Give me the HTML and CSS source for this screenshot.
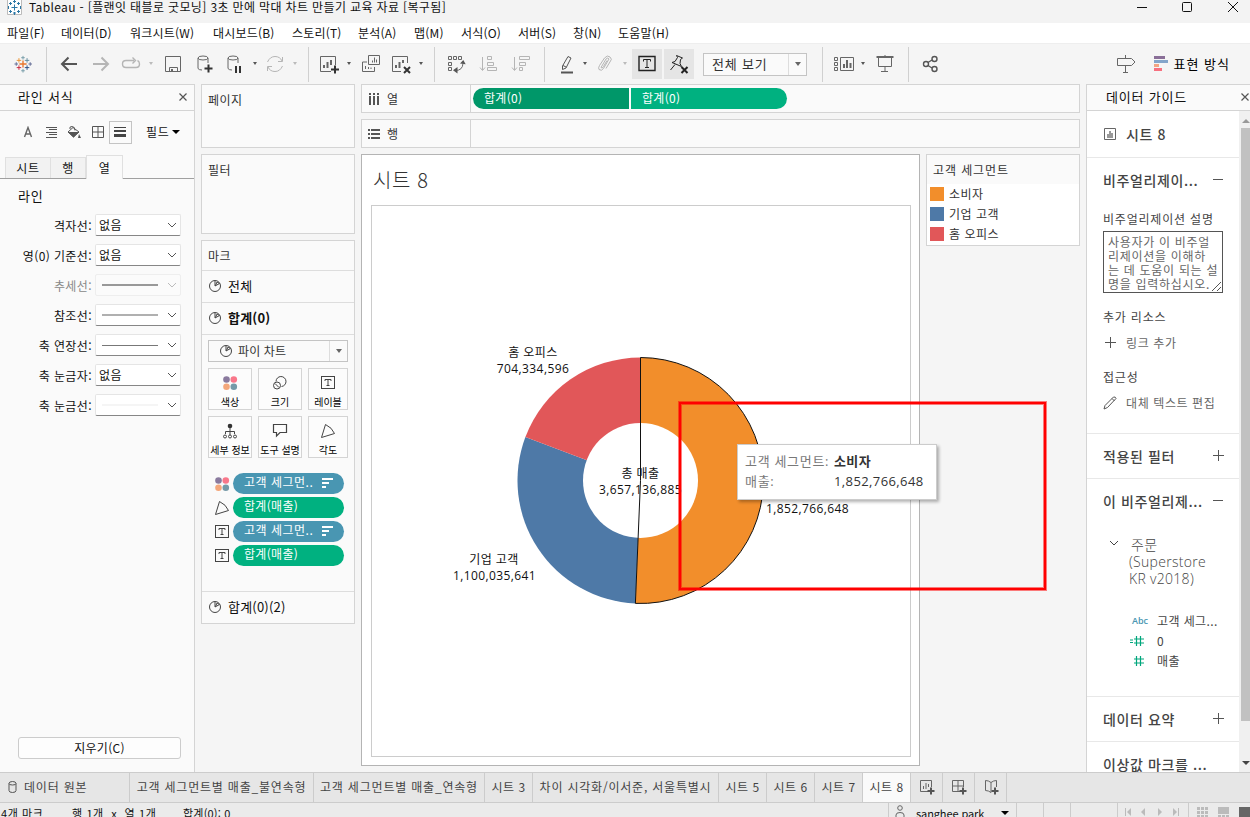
FILE: index.html
```html
<!DOCTYPE html>
<html lang="ko">
<head>
    <meta charset="UTF-8">
    <meta name="viewport" content="width=device-width, initial-scale=1.0">
    <title>Tableau</title>
    <link rel="stylesheet" href="styles.css">
</head>
<body>
    <!-- shared icons -->
    <svg class="sprite">
        <symbol id="logo" viewBox="0 0 20 20">
            <path stroke="#e8762c" stroke-width="1.5" d="M10 6v8M6 10h8"/>
            <path stroke="#c72037" d="M5.5 11.500v5M3 14h5"/>
            <path stroke="#eb912c" d="M5.500 3.500v5M3 6h5"/>
            <path stroke="#5b879b" d="M14.500 3.500v5M12 6h5"/>
            <path stroke="#1f457e" d="M14.500 11.500v5M12 14h5"/>
            <path stroke="#7099a5" d="M10 1v4M8 3h4M10 15.500v4M8 17.500h4"/>
            <path stroke="#5c6692" d="M18 8v4M16 10h4M2.500 8v4M.5 10h4"/>
        </symbol>
        <symbol id="pie" viewBox="0 0 14 14">
            <g fill="none" stroke="#444"><circle cx="7" cy="7" r="5.500"/><path d="M7 7V2M7 7l4.500-2.500M7.500 6.500 9 3l2.300 1.400"/></g>
        </symbol>
        <symbol id="label" viewBox="0 0 14 14">
            <g fill="none" stroke="#444"><rect x=".5" y=".5" width="13" height="12"/><path d="M4 5V3.500h6V5M7 3.500v6M5.500 9.500h3"/></g>
        </symbol>
        <symbol id="color" viewBox="0 0 16 16">
            <circle cx="4.500" cy="4.500" r="3.300" fill="#8a7a9e"/><circle cx="11.800" cy="4.500" r="3.300" fill="#f9778a"/>
            <circle cx="4.500" cy="11.800" r="3.300" fill="#f4a77b"/><circle cx="11.800" cy="11.800" r="3.300" fill="#769aa8"/>
        </symbol>
        <symbol id="angle" viewBox="0 0 16 16">
            <path fill="none" stroke="#444" d="M5.500 1.500 1.500 14.500 14.500 10.500Q12 4.500 5.500 1.500z"/>
        </symbol>
        <symbol id="sort" viewBox="0 0 12 10">
            <path stroke="#fff" stroke-width="2" d="M0 1h11M0 5h7M0 9h4"/>
        </symbol>
        <symbol id="down" viewBox="0 0 10 6"><path fill="none" stroke="currentColor" d="M1 1l4 4 4-4"/></symbol>
        <symbol id="close" viewBox="0 0 8 8"><path fill="none" stroke="#555" stroke-width="1.200" d="M.5.5l7 7M7.500.5l-7 7"/></symbol>
        <symbol id="cyl" viewBox="0 0 20 20">
            <g fill="none" stroke="#666"><ellipse cx="8" cy="4" rx="5" ry="2"/><path d="M3 4v10.500q1 1.500 4 1.500M13 4v5"/></g>
        </symbol>
    </svg>

    <div class="titlebar">
        <svg class="app-icon" viewBox="0 0 15 15"><path fill="#fff" stroke="#bbb" d="M.5-1h14v15.500H.5z"/><path fill="none" stroke="#2d78a6" d="M7.500 4.500v6M4.500 7.500h6M7.500 0v3M6 1.500h3M7.500 12v3M6 13h3M3.500 2v3M2 3.500h3M11.500 2v3M10 3.500h3M3.500 10v3M2 11.500h3M11.500 10v3M10 11.500h3M1.500 6v3M13.500 6v3"/></svg>
        <span class="title-text">Tableau - [플랜잇 태블로 굿모닝] 3초 만에 막대 차트 만들기 교육 자료 [복구됨]</span>
        <svg class="window-buttons" viewBox="0 0 104 14"><g fill="none" stroke="#111"><path d="M0 7.500h10"/><rect x="45.500" y="2.500" width="9" height="9" rx="1"/><path d="M91 2l10 10M101 2 91 12"/></g></svg>
    </div>

    <div class="menubar">
        <span class="m1">파일(F)</span><span class="m2">데이터(D)</span><span class="m3">워크시트(W)</span><span class="m4">대시보드(B)</span><span class="m5">스토리(T)</span><span class="m6">분석(A)</span><span class="m7">맵(M)</span><span class="m8">서식(O)</span><span class="m9">서버(S)</span><span class="m10">창(N)</span><span class="m11">도움말(H)</span>
    </div>

    <div class="toolbar">
        <div class="tool home"><svg class="ic18"><use href="#logo"/></svg></div>
        <i class="sep"></i>
        <div class="tool"><svg class="ic" viewBox="0 0 20 20"><path class="l2 dark" d="M18 10H3M9.500 3.500 3 10l6.500 6.500"/></svg></div>
        <div class="tool"><svg class="ic" viewBox="0 0 20 20"><path class="l2 dim" d="M2 10h15M10.500 3.500 17 10l-6.500 6.500"/></svg></div>
        <div class="tool narrow"><svg class="ic" viewBox="0 0 20 20"><path class="l dim thick" d="M13 6.500H5Q1.500 6.500 1.500 10T5 13.500h10Q18.500 13.500 18.500 10 18.500 7.500 16.500 6.500M11.500 3.500l3 3-3 3"/></svg></div>
        <i class="caret dim"></i>
        <div class="tool"><svg class="ic" viewBox="0 0 20 20"><path class="l" d="M2.500 2.500h15v15h-15zM6.500 17.500v-4h8v4"/><path fill="#666" d="M8 15h2v2.500H8z"/></svg></div>
        <div class="tool"><svg class="ic"><use href="#cyl"/><path class="plus" d="M13.500 10.500v8M9.500 14.500h8"/></svg></div>
        <div class="tool narrow"><svg class="ic"><use href="#cyl"/><path class="plus" d="M11 12v7M15 12v7"/></svg></div>
        <i class="caret"></i>
        <div class="tool narrow"><svg class="ic" viewBox="0 0 20 20"><path class="l dim" d="M2.500 8Q5 2.500 10 2.500T17 7M17.500 3v4.500H13M17.500 12Q15 17.500 10 17.500T3 13M2.500 17v-4.500H7"/></svg></div>
        <i class="caret dim"></i>
        <i class="sep"></i>
        <div class="tool narrow"><svg class="ic" viewBox="0 0 20 20"><path class="l" d="M12 17.500H1.500v-15h15V11"/><path class="l2 bars" d="M5 14v-3M8.500 14V8M12 11V6"/><path class="plus" d="M16 11.500v8M12 15.500h8"/></svg></div>
        <i class="caret"></i>
        <div class="tool"><svg class="ic" viewBox="0 0 20 20"><path class="l" d="M6 8H1.500v9.500h12V13M7.500 1.500h11v9h-11zM4.500 15v-3M7.500 15v-2M10 15v-1.500M11.500 8.500v-2M13.500 8.500v-5M15.500 8.500v-3"/></svg></div>
        <div class="tool narrow"><svg class="ic" viewBox="0 0 20 20"><path class="l" d="M10 17.500H1.500v-15h15V9"/><path class="l2 bars" d="M5 14v-3M8.500 14V8M12 9V6"/><path class="plus" d="M13 13l6 6M19 13l-6 6"/></svg></div>
        <i class="caret"></i>
        <i class="sep"></i>
        <div class="tool"><svg class="ic" viewBox="0 0 20 20"><path class="l" d="M1.500 2.500h3v3h-3zM6.500 2.500h3v3h-3zM11.500 2.500h3v3h-3zM1.500 8.500h3v3h-3zM1.500 13.500h3v3h-3zM8.500 16.500q7 0 7.500-7"/><path fill="#555" d="M13 9.500 16.300 6l2.400 4.300zM10.500 13v6.500L6 16.200z"/></svg></div>
        <div class="tool"><svg class="ic" viewBox="0 0 20 20"><path class="l dim" d="M3.500 3v13M1 13.500l2.500 3 2.500-3M8.500 2.500h4v3h-4zM8.500 8.500h6v3h-6zM8.500 13.500h9v3h-9z"/></svg></div>
        <div class="tool"><svg class="ic" viewBox="0 0 20 20"><path class="l dim" d="M3.500 3v13M1 13.500l2.500 3 2.500-3M8.500 2.500h10v3h-10zM8.500 8.500h6v3h-6zM8.500 13.500h3v3h-3z"/></svg></div>
        <i class="sep"></i>
        <div class="tool narrow"><svg class="ic" viewBox="0 0 20 20"><path class="l dark" d="M13 2.500l3 1.500-5 10-3.500 1.500V12zM8 11.500l3 1.500"/><path class="l2 dark" d="M6 18.500h12"/></svg></div>
        <i class="caret"></i>
        <div class="tool narrow"><svg class="ic" viewBox="0 0 20 20"><path class="l dim" d="M6 13.500 11 5q2-2 3 0l-5.500 9.500q-2 3-4.500 1Q3 14 4.500 11.500L9.500 4Q12.500.5 15 3t.5 4L11 14.500M6 13.500q1 1.500 2.500-1l3.500-6"/></svg></div>
        <i class="caret dim"></i>
        <div class="tool on"><svg class="ic" viewBox="0 0 20 20"><path class="l black thick" d="M2 2.500h16v14H2z"/><path class="l black" d="M6.500 7.500V5.500h7v2M10 5.500v8M8 13.500h4"/></svg></div>
        <div class="tool on"><svg class="ic" viewBox="0 0 20 20"><path class="l black" d="M7.500 1.500l6 2.500-2 1.500-.5 4 1.500 3L3 8.500l3-1 2.500-4zM6 10.500 1.500 16"/><path class="plus black" d="M12.500 13l6 6M18.500 13l-6 6"/></svg></div>
        <div class="fit-select"><span>전체 보기</span><b><i class="caret"></i></b></div>
        <i class="sep fit-sep"></i>
        <div class="tool narrow"><svg class="ic wide" viewBox="0 0 24 20"><path class="l" d="M3.500 3.500h3v3h-3zM3.500 8.500h3v3h-3zM3.500 13.500h3v3h-3zM9.500 3.500h13v13h-13z"/><path class="l2" d="M13 14v-4M16 14V6M19.500 14V9"/></svg></div>
        <i class="caret"></i>
        <div class="tool"><svg class="ic" viewBox="0 0 20 20"><path class="l" d="M3.500 3.500v9h13v-9M10 1v2M10 12.500v5M6 17.500h7"/><path class="l2" d="M1.500 3h17"/></svg></div>
        <i class="sep"></i>
        <div class="tool"><svg class="ic" viewBox="0 0 20 20"><g class="l dark thick"><circle cx="5" cy="10" r="2.500"/><circle cx="13.500" cy="5" r="2.500"/><circle cx="13.500" cy="15" r="2.500"/><path d="M7 8.500l4-2.500M7 11.500l4 2.500"/></g></svg></div>
        <div class="show-me">
            <svg class="ic" viewBox="0 0 20 20"><path class="l" d="M1.500 4.500h14l3.500 3.500-3.500 3.500h-14zM9.500 1v3M9.500 11.500v7M7 18.500h5"/></svg>
            <svg class="bars4" viewBox="0 0 14 16"><path fill="#8a6f98" d="M0 0h11v3H0z"/><path fill="#84a5ca" d="M0 4h14v3H0z"/><path fill="#f2a583" d="M0 8h5v3H0z"/><path fill="#f7707f" d="M0 12h8v3H0z"/></svg>
            <span>표현 방식</span>
        </div>
    </div>

    <div class="workspace">
        <div class="format-pane">
            <div class="pane-head"><span>라인 서식</span><svg class="x"><use href="#close"/></svg></div>
            <div class="format-icons">
                <svg viewBox="0 0 12 12"><path fill="none" stroke="#666" stroke-width="1.400" d="M2.500 11 6 1.500 9.500 11M4 8h4"/></svg>
                <svg viewBox="0 0 12 12"><path stroke="#555" d="M1 1.500h11M4 3.500h8M1 6.500h11M4 8.500h8M1 11.500h11"/></svg>
                <svg class="bucket" viewBox="0 0 14 13"><path fill="none" stroke="#555" d="M1 6 6 1.500l6 4.500-5.500 5zM3 3Q2 .5 5 .5t3 4"/><path fill="#555" d="M1 6h11l-5.500 5.500zM12 8l2 4h-3z"/></svg>
                <svg viewBox="0 0 12 12"><path fill="none" stroke="#555" d="M.5.5h11v11H.5zM6 0v12M0 6h12"/></svg>
                <span class="selected"><svg viewBox="0 0 12 12"><path fill="#444" d="M0 1h12v1H0zM0 4h12v2H0zM0 8h12v3H0z"/></svg></span>
                <span class="field">필드<i></i></span>
            </div>
            <div class="format-tabs"><span>시트</span><span>행</span><span class="active">열</span></div>
            <h4>라인</h4>
            <div class="line-form">
                <label>격자선:</label><div class="select">없음<svg><use href="#down"/></svg></div>
                <label>영(0) 기준선:</label><div class="select">없음<svg><use href="#down"/></svg></div>
                <label class="off">추세선:</label><div class="select off"><hr class="w2 grey"><svg><use href="#down"/></svg></div>
                <label>참조선:</label><div class="select"><hr class="w2"><svg><use href="#down"/></svg></div>
                <label>축 연장선:</label><div class="select"><hr class="w1"><svg><use href="#down"/></svg></div>
                <label>축 눈금자:</label><div class="select">없음<svg><use href="#down"/></svg></div>
                <label>축 눈금선:</label><div class="select"><hr class="w2 faint"><svg><use href="#down"/></svg></div>
            </div>
            <button class="clear">지우기(C)</button>
        </div>

        <div class="cards">
            <div class="card pages">페이지</div>
            <div class="card filters">필터</div>
            <div class="marks">
                <div class="marks-head">마크</div>
                <div class="marks-row"><svg class="pie"><use href="#pie"/></svg>전체</div>
                <div class="marks-row bold"><svg class="pie"><use href="#pie"/></svg>합계(0)</div>
                <div class="marks-body">
                    <div class="mark-type"><svg class="pie"><use href="#pie"/></svg><span>파이 차트</span><b><i class="caret"></i></b></div>
                    <div class="mark-buttons">
                        <div><svg><use href="#color"/></svg>색상</div>
                        <div><svg viewBox="0 0 16 16"><g fill="none" stroke="#444"><path d="M4 6.500A5 5 0 1 1 9.500 11.500"/><circle cx="5" cy="10.500" r="3.500"/><path d="M3 8.500l4 4"/></g></svg>크기</div>
                        <div><svg class="ic14"><use href="#label"/></svg>레이블</div>
                        <div><svg viewBox="0 0 16 16"><circle cx="8" cy="3" r="2.300" fill="#333"/><g fill="none" stroke="#444"><path d="M8 5v7M3.500 11V8.500h9V11"/><circle cx="3" cy="13.500" r="1.500"/><circle cx="8" cy="13.500" r="1.500"/><circle cx="13" cy="13.500" r="1.500"/></g></svg>세부 정보</div>
                        <div><svg viewBox="0 0 16 16"><path fill="none" stroke="#444" stroke-width="1.200" d="M1.500 1.500h13v8H8l-3.500 3.500v-3.500h-3z"/></svg>도구 설명</div>
                        <div><svg><use href="#angle"/></svg>각도</div>
                    </div>
                    <div class="encodings">
                        <svg><use href="#color"/></svg><div class="pill blue">고객 세그먼..<svg><use href="#sort"/></svg></div>
                        <svg><use href="#angle"/></svg><div class="pill">합계(매출)</div>
                        <svg class="ic14"><use href="#label"/></svg><div class="pill blue">고객 세그먼..<svg><use href="#sort"/></svg></div>
                        <svg class="ic14"><use href="#label"/></svg><div class="pill">합계(매출)</div>
                    </div>
                </div>
                <div class="marks-row last"><svg class="pie"><use href="#pie"/></svg>합계(0)(2)</div>
            </div>
        </div>

        <div class="center">
            <div class="shelf">
                <div class="shelf-name"><svg viewBox="0 0 12 12"><path stroke="#555" stroke-width="2" d="M2 3v9M6 3v9M10 3v9M2 0v2M6 0v2M10 0v2"/></svg>열</div>
                <div class="pill col-a">합계(0)</div><div class="pill col-b">합계(0)</div>
            </div>
            <div class="shelf">
                <div class="shelf-name"><svg viewBox="0 0 12 12"><path stroke="#555" stroke-width="2" d="M0 2h2M0 6h2M0 10h2M3 2h9M3 6h9M3 10h9"/></svg>행</div>
            </div>
            <div class="view-row">
                <div class="view">
                    <h1>시트 8</h1>
                    <svg class="chart" viewBox="0 0 538 550">
                        <g transform="translate(268.500 274.500)">
                            <path fill="#f28e2b" d="M0 0V-123A123 123 0 1 1 -5.100 122.900z"/>
                            <path fill="#4e79a7" d="M0 0 -5.100 122.900A123 123 0 0 1 -115.100 -43.400z"/>
                            <path fill="#e15759" d="M0 0 -115.100 -43.400A123 123 0 0 1 0 -123z"/>
                            <circle r="57.500" fill="#fff"/>
                            <path fill="none" stroke="#111" d="M0 0V-123A123 123 0 1 1 -5.100 122.900z"/>
                            <text x="-107.500" y="-124">홈 오피스</text>
                            <text x="-107.500" y="-107.500">704,334,596</text>
                            <text x="-146.500" y="83">기업 고객</text>
                            <text x="-146" y="99.500">1,100,035,641</text>
                            <text x="0" y="-3">총 매출</text>
                            <text x="0" y="13.500">3,657,136,885</text>
                            <text x="167" y="32.500">1,852,766,648</text>
                        </g>
                    </svg>
                </div>
                <div class="legend">
                    <h5>고객 세그먼트</h5>
                    <p><i class="orange"></i>소비자</p>
                    <p><i class="navy"></i>기업 고객</p>
                    <p><i class="red"></i>홈 오피스</p>
                </div>
            </div>
        </div>

        <div class="guide">
            <div class="pane-head"><span>데이터 가이드</span><svg class="x"><use href="#close"/></svg></div>
            <div class="guide-body">
                <div class="guide-content">
                    <section class="sheet"><svg viewBox="0 0 12 12"><path fill="none" stroke="#666" d="M.5.5h11v11H.5z"/><path fill="#999" d="M3 6h2V3h2v2h2v5H3z"/></svg>시트 8</section>
                    <section class="describe">
                        <h3>비주얼리제이...<i class="minus"></i></h3>
                        <h6>비주얼리제이션 설명</h6>
                        <div class="textarea">사용자가 이 비주얼<br>리제이션을 이해하<br>는 데 도움이 되는 설<br>명을 입력하십시오.<svg viewBox="0 0 9 9"><path stroke="#555" d="M0 9l9-9M5 9l4-4"/></svg></div>
                        <h6 class="more">추가 리소스</h6>
                        <a><svg viewBox="0 0 14 14"><path stroke="#555" d="M7.500 1v11M2 6.500h11"/></svg>링크 추가</a>
                        <h6 class="access">접근성</h6>
                        <a><svg viewBox="0 0 14 14"><path fill="none" stroke="#555" d="M1 13l1-3.500L10.500 1q2-.5 2.500 1.500L4.500 11.500zM9 2.500l2.500 2.500"/></svg>대체 텍스트 편집</a>
                    </section>
                    <section><h3>적용된 필터<i class="plus-sign"></i></h3></section>
                    <section class="used">
                        <h3>이 비주얼리제...<i class="minus"></i></h3>
                        <div class="source"><svg><use href="#down"/></svg><span><em>주문</em><br>(Superstore<br>KR v2018)</span></div>
                        <div class="fields">
                            <b class="abc">Abc</b><span>고객 세그...</span>
                            <svg viewBox="0 0 14 12"><path stroke="#00a67c" stroke-width="1.200" d="M0 5h3M0 7.500h3M6.500 1v10M10.500 1v10M4 4h10M4 8h10"/></svg><span>0</span>
                            <svg viewBox="0 0 14 12"><path stroke="#00a67c" stroke-width="1.200" d="M6.500 1v10M10.500 1v10M4 4h10M4 8h10"/></svg><span>매출</span>
                        </div>
                    </section>
                    <section><h3>데이터 요약<i class="plus-sign"></i></h3></section>
                    <section class="outlier"><h3>이상값 마크를 ...</h3></section>
                </div>
                <div class="scrollbar"><i class="up"></i><div class="thumb"></div><i class="dn"></i></div>
            </div>
        </div>
    </div>

    <div class="tabs">
        <div class="t-data"><svg viewBox="0 0 9 12"><path fill="none" stroke="#555" d="M1 2.500v7q0 2 3.500 2t3.500-2v-7q0-2-3.500-2T1 2.500q0 1.500 3.500 1.500T8 2.500"/></svg>데이터 원본</div>
        <div class="t-1">고객 세그먼트별 매출_불연속형</div>
        <div class="t-2">고객 세그먼트별 매출_연속형</div>
        <div class="t-s">시트 3</div>
        <div class="t-4">차이 시각화/이서준, 서울특별시</div>
        <div class="t-s">시트 5</div>
        <div class="t-s">시트 6</div>
        <div class="t-s">시트 7</div>
        <div class="t-s current">시트 8</div>
        <div class="t-new"><svg viewBox="0 0 16 16"><path fill="none" stroke="#666" d="M9 12.500H1.500v-11h11V8M4.500 10V7M7 10V4M9.500 8V5"/><path stroke="#555" stroke-width="2" d="M12 8.500v7M8.500 12h7"/></svg></div>
        <div class="t-new"><svg viewBox="0 0 16 16"><path fill="none" stroke="#666" d="M9 12.500H1.500v-11h11V8M7 1.500v11M1.500 7h11"/><path stroke="#555" stroke-width="2" d="M12 8.500v7M8.500 12h7"/></svg></div>
        <div class="t-new"><svg viewBox="0 0 16 16"><path fill="none" stroke="#666" d="M13.500 8V1.500q-3 0-5.500 2-2.500-2-5.500-2v10q3 0 5.500 2v-10"/><path stroke="#555" stroke-width="2" d="M12 8.500v7M8.500 12h7"/></svg></div>
    </div>

    <div class="status">
        <span class="s-marks">4개 마크</span><span class="s-rows">행 1개&nbsp; x&nbsp; 열 1개</span><span class="s-sum">합계(0): 0</span>
        <div class="user"><svg viewBox="0 0 10 13"><g fill="none" stroke="#666"><circle cx="5" cy="3" r="2.300"/><path d="M1 13v-3q0-2.500 4-2.500t4 2.500v3"/></g></svg>sanghee park<i></i></div>
        <div class="cell c1"></div><div class="cell c2"></div><div class="cell c3"></div>
        <div class="cell nav"><svg viewBox="0 0 58 10"><path fill="#bbb" d="M1 1h1v8H1zM7 1v8L3 5zM21 1v8l-4-4zM34 1v8l4-4zM49 1v8l4-4zM54 1h1v8h-1z"/></svg></div>
        <div class="cell thumbs"><svg viewBox="0 0 54 12"><path fill="#bbb" d="M0 0h3v3H0zM4 0h3v3H4zM8 0h3v3H8zM0 4h3v3H0zM4 4h3v3H4zM8 4h3v3H8zM0 8h3v3H0zM4 8h3v3H4zM8 8h3v3H8zM21 0h11v7H21zM21 8h3v3h-3zM25 8h3v3h-3zM29 8h3v3h-3z"/><path fill="#666" d="M42 0h12v12H42z"/></svg></div>
    </div>

    <div class="highlight-box"></div>
    <div class="tooltip">
        <span>고객 세그먼트:</span><b>소비자</b>
        <span>매출:</span><em>1,852,766,648</em>
    </div>
</body>
</html>
```
FILE: styles.css
```css
* {
    box-sizing: border-box;
}
body {
    margin: 0;
    width: 1250px;
    height: 817px;
    overflow: hidden;
    position: relative;
    display: flex;
    flex-direction: column;
    background-color: #f5f5f5;
    color: #111;
    font-family: "Noto Sans CJK KR", sans-serif;
    font-size: 12px;
    line-height: 16px;
    white-space: nowrap;
}
h1, h3, h4, h5, h6, p {
    margin: 0;
    font-weight: normal;
}
em {
    font-style: normal;
}
svg {
    flex: none;
    display: block;
}
.sprite {
    position: absolute;
    width: 0;
    height: 0;
}

/* title and menu */
.titlebar {
    height: 23px;
    flex: none;
    display: flex;
    background-color: #f3f3f3;
}
.app-icon {
    width: 15px;
    height: 15px;
    margin-left: 7px;
}
.title-text {
    margin-left: 7px;
    line-height: 14px;
    height: 16px;
    letter-spacing: 0.36px;
}
.window-buttons {
    width: 104px;
    height: 14px;
    margin: 0 9px 0 auto;
}
.menubar {
    height: 20px;
    flex: none;
    display: flex;
    padding-left: 7px;
    background-color: #fff;
    line-height: 20px;
    letter-spacing: 0.2px;
}
.m1 { width: 54px; }
.m2 { width: 69px; }
.m3 { width: 83px; }
.m4 { width: 79px; }
.m5 { width: 66px; }
.m6 { width: 56px; }
.m7 { width: 47px; }
.m8 { width: 57px; }
.m9 { width: 55px; }
.m10 { width: 45px; }

/* toolbar */
.toolbar {
    height: 41px;
    flex: none;
    display: flex;
    align-items: center;
    border-top: 1px solid #eee;
}
.tool {
    width: 32px;
    height: 30px;
    display: flex;
    align-items: center;
    justify-content: center;
}
.tool.home {
    width: 46px;
}
.tool.narrow {
    width: 28px;
}
.tool.on {
    width: 30px;
    margin-left: 1px;
    background-color: #e5e5e5;
}
.tool.on + .tool.on {
    margin-left: 2px;
}
.ic {
    width: 20px;
    height: 20px;
}
.ic.wide {
    width: 24px;
}
.ic18 {
    width: 18px;
    height: 18px;
}
.l, .l2, .plus {
    fill: none;
    stroke: #666;
}
.l2, .plus {
    stroke-width: 2;
}
.plus {
    stroke: #333;
}
.thick {
    stroke-width: 1.4;
}
.dark {
    stroke: #555;
}
.dim {
    stroke: #b5b5b5;
}
.black {
    stroke: #222;
}
.sep {
    width: 1px;
    height: 35px;
    margin: 0 6px 0 7px;
    background-color: #d0d0d0;
}
.home + .sep {
    margin-left: 0;
}
.caret {
    width: 12px;
    height: 4px;
    display: flex;
    justify-content: center;
}
.caret::before {
    content: "";
    border: 2.5px solid transparent;
    border-top: 3px solid #555;
}
.caret.dim::before {
    border-top-color: #bbb;
}
.fit-select {
    width: 104px;
    height: 23px;
    margin-left: 9px;
    display: flex;
    border: 1px solid #c4c4c4;
    background-color: #fafafa;
    color: #333;
    font-size: 13px;
    line-height: 19px;
    letter-spacing: 0.8px;
    padding-left: 8px;
}
.fit-select b, .mark-type b {
    width: 18px;
    margin-left: auto;
    border-left: 1px solid #ddd;
    display: flex;
    align-items: center;
    justify-content: center;
}
.fit-select .caret::before, .mark-type .caret::before {
    border: 3.5px solid transparent;
    border-top: 4px solid #666;
}
.fit-sep {
    margin-left: 15px;
}
.show-me {
    margin-left: auto;
    margin-right: 20px;
    display: flex;
    align-items: center;
    color: #000;
}
.show-me span {
    font-size: 13px;
    margin-left: 6px;
    letter-spacing: 1px;
}
.bars4 {
    width: 14px;
    height: 16px;
    margin-left: 18px;
}

.workspace {
    height: 688px;
    flex: none;
    display: flex;
}

/* left pane */
.pane-head {
    height: 27px;
    display: flex;
    align-items: center;
    justify-content: space-between;
    border-top: 1px solid #d4d4d4;
    border-bottom: 1px solid #d4d4d4;
    background-color: #fafafa;
    font-size: 13px;
    letter-spacing: 0.8px;
    flex: none;
}
.pane-head .x {
    width: 8px;
    height: 8px;
}
.format-pane {
    width: 195px;
    display: flex;
    flex-direction: column;
    background-color: #fafafa;
    border-right: 1px solid #d4d4d4;
}
.format-pane .pane-head {
    padding: 0 7px 1px 18px;
}
.format-icons {
    display: flex;
    align-items: center;
    height: 42px;
    padding-left: 22px;
    gap: 10.5px;
}
.format-icons svg {
    width: 12px;
    height: 12px;
}
.format-icons .bucket {
    width: 14px;
    height: 13px;
}
.format-icons .selected {
    width: 23px;
    height: 23px;
    margin-left: -5.5px;
    border: 1px solid #c4c4c4;
    display: flex;
    align-items: center;
    justify-content: center;
}
.field {
    display: flex;
    align-items: center;
    margin-left: 4px;
    letter-spacing: 0.6px;
}
.field i {
    border: 4px solid transparent;
    border-top-color: #000;
    margin: 4px 0 0 3px;
}
.format-tabs {
    display: flex;
    align-items: flex-end;
    height: 26px;
    padding-left: 5px;
    border-bottom: 1px solid #a0a0a0;
    line-height: 20px;
    letter-spacing: 0.6px;
    text-align: center;
}
.format-tabs span {
    width: 46px;
    height: 21px;
    border: 1px solid #e0e0e0;
    border-bottom: 0;
    background-color: #f2f2f2;
}
.format-tabs span + span {
    width: 35px;
    border-left: 0;
}
.format-tabs .active {
    width: 37px;
    height: 24px;
    line-height: 24px;
    margin-bottom: -1px;
    background-color: #fafafa;
    border-left: 1px solid #e0e0e0;
}
.format-pane h4 {
    margin: 9px 0 0 18px;
    font-size: 13px;
    line-height: 16px;
    letter-spacing: 0.8px;
}
.line-form {
    display: grid;
    grid-template-columns: 92px 86px;
    column-gap: 3px;
    row-gap: 8px;
    margin-top: 10px;
    text-align: right;
    letter-spacing: 0.4px;
}
.line-form label {
    line-height: 23px;
    height: 22px;
}
.line-form .off {
    color: #888;
}
.select {
    height: 22px;
    border: 1px solid #e5e5e5;
    border-bottom-color: #868686;
    border-radius: 2px;
    background-color: #fff;
    display: flex;
    align-items: center;
    justify-content: space-between;
    padding: 0 3px 0 3px;
}
.select svg {
    width: 10px;
    height: 6px;
    color: #555;
}
.select.off {
    border-color: #eee;
    background-color: #fbfbfb;
}
.select.off svg {
    color: #bbb;
}
.select hr {
    width: 56px;
    margin: 0 0 0 3px;
    border: 0;
    border-top: 1px solid #777;
}
.select .w2 {
    border-top: 2px solid #b0b0b0;
}
.select .grey {
    border-color: #999;
}
.select .faint {
    border-color: #f5f5f5;
}
.clear {
    width: 163px;
    height: 22px;
    margin: auto 0 13px 18px;
    padding: 0;
    border: 1px solid #ccc;
    border-radius: 3px;
    background-color: #fdfdfd;
    font: inherit;
    letter-spacing: 0.3px;
    color: #111;
}

/* cards */
.cards {
    width: 154px;
    margin-left: 6px;
    display: flex;
    flex-direction: column;
    gap: 6px;
    flex: none;
}
.card, .marks {
    border: 1px solid #d4d4d4;
    background-color: #fafafa;
    color: #333;
    letter-spacing: 0.5px;
}
.card {
    padding: 7px 6px;
}
.pages {
    height: 64px;
}
.filters {
    height: 80px;
}
.marks {
    height: 384px;
}
.marks-head {
    padding: 7px 6px;
    height: 29px;
}
.marks-row {
    height: 32px;
    border-top: 1px solid #ddd;
    display: flex;
    align-items: center;
    gap: 6px;
    padding: 0 0 1px 6px;
    font-size: 13px;
    letter-spacing: 0.2px;
    color: #111;
}
.marks-row.bold {
    font-weight: bold;
}
.pie {
    width: 14px;
    height: 14px;
}
.marks-body {
    height: 257px;
    border-top: 1px solid #ddd;
    padding: 5px 6px 0;
}
.mark-type {
    height: 22px;
    width: 140px;
    display: flex;
    align-items: center;
    gap: 5px;
    padding-left: 10px;
    border: 1px solid #c4c4c4;
    letter-spacing: 0.1px;
}
.mark-type b {
    height: 20px;
}
.mark-buttons {
    display: grid;
    grid-template-columns: 44px 44px 40px;
    gap: 6px;
    margin-top: 6px;
    font-size: 10px;
    letter-spacing: 0;
    line-height: 12px;
    color: #000;
}
.mark-buttons div {
    height: 42px;
    border: 1px solid #d4d4d4;
    background-color: #fcfcfc;
    display: flex;
    flex-direction: column;
    align-items: center;
    justify-content: space-between;
    padding: 6px 0 1px;
}
.mark-buttons svg {
    width: 16px;
    height: 16px;
}
.mark-buttons .ic14, .encodings .ic14 {
    width: 14px;
    height: 14px;
}
.mark-buttons .ic14 {
    margin-top: 1px;
}
.encodings {
    display: grid;
    grid-template-columns: 16px 111px;
    column-gap: 3px;
    row-gap: 3px;
    padding: 15px 0 0 6px;
    align-items: center;
    justify-items: center;
}
.encodings > svg {
    width: 16px;
    height: 16px;
}
.pill {
    width: 111px;
    height: 21px;
    border-radius: 11px;
    background-color: #00b180;
    color: #fff;
    padding: 0 10px 0 11px;
    line-height: 19px;
    letter-spacing: 0.3px;
    display: flex;
    justify-content: space-between;
}
.encodings .pill {
    line-height: 17px;
}
.encodings .blue {
    letter-spacing: 0.5px;
}
.pill.blue {
    background-color: #4996b2;
}
.pill svg {
    width: 12px;
    height: 10px;
    margin-top: 5px;
}

/* shelves and view */
.center {
    width: 719px;
    margin-left: 6px;
    display: flex;
    flex-direction: column;
    flex: none;
}
.shelf {
    height: 29px;
    border: 1px solid #d4d4d4;
    background-color: #fafafa;
    display: flex;
    margin-bottom: 6px;
}
.shelf-name {
    width: 109px;
    border-right: 1px solid #d4d4d4;
    display: flex;
    align-items: center;
    gap: 7px;
    padding-left: 6px;
    color: #333;
    margin-right: 2px;
}
.shelf-name svg {
    width: 12px;
    height: 12px;
}
.shelf .pill {
    margin-top: 3px;
    width: 156px;
}
.col-a {
    background-color: #009769;
    border-radius: 11px 0 0 11px;
    margin-right: 2px;
}
.col-b {
    border-radius: 0 11px 11px 0;
}
.view-row {
    display: flex;
    align-items: flex-start;
    gap: 6px;
}
.view {
    width: 559px;
    height: 612px;
    border: 1px solid #b4b4b4;
    background-color: #fff;
    padding: 0 9px;
}
.view h1 {
    height: 50px;
    line-height: 49px;
    padding-left: 2px;
    font-size: 20px;
    font-weight: 300;
    letter-spacing: 0.6px;
    color: #333;
}
.chart {
    width: 540px;
    height: 552px;
    border: 1px solid #ccc;
}
.chart text {
    font-family: "Open Sans", "Noto Sans CJK KR", sans-serif;
    font-size: 12px;
    letter-spacing: 0.4px;
    text-anchor: middle;
    fill: #111;
}
.legend {
    width: 154px;
    height: 92px;
    border: 1px solid #d4d4d4;
    background-color: #fff;
    color: #333;
    letter-spacing: 0.5px;
}
.legend h5 {
    height: 29px;
    padding: 0 6px;
    line-height: 30px;
    font-size: 12px;
    letter-spacing: 0.9px;
    background-color: #fafafa;
}
.legend p {
    height: 20px;
    display: flex;
    align-items: center;
    gap: 5px;
    padding-left: 3px;
}
.legend i {
    width: 14px;
    height: 14px;
}
.orange { background-color: #f28e2b; }
.navy { background-color: #4e79a7; }
.red { background-color: #e15759; }

/* data guide */
.guide {
    width: 164px;
    margin-left: 6px;
    border-left: 1px solid #d4d4d4;
    display: flex;
    flex-direction: column;
    overflow: hidden;
    color: #444;
    letter-spacing: 0.6px;
}
.guide .pane-head {
    padding: 0 1px 1px 19px;
    color: #111;
}
.guide-body {
    display: flex;
    height: 661px;
    background-color: #fff;
}
.guide-content {
    width: 152px;
    overflow: hidden;
}
.guide section {
    height: 45px;
    padding: 0 15px 0 16px;
    border-bottom: 1px solid #e8e8e8;
}
.guide .sheet {
    height: 47px;
    display: flex;
    align-items: center;
    gap: 10px;
    padding-left: 17px;
    font-size: 14px;
    font-weight: 500;
}
.sheet svg {
    width: 12px;
    height: 12px;
}
.guide h3 {
    height: 44px;
    padding-bottom: 1px;
    display: flex;
    align-items: center;
    justify-content: space-between;
    font-size: 14px;
    font-weight: 500;
}
.minus {
    width: 10px;
    height: 1px;
    margin-right: 1px;
    background-color: #555;
}
.plus-sign {
    width: 11px;
    height: 11px;
    background: linear-gradient(#555, #555) center / 11px 1px no-repeat, linear-gradient(#555, #555) center / 1px 11px no-repeat;
}
.guide .describe {
    height: 276px;
}
.describe h6 {
    font-size: 12px;
    line-height: 16px;
    margin-top: 9px;
    letter-spacing: 0.8px;
}
.textarea {
    position: relative;
    width: 120px;
    height: 62px;
    margin-top: 4px;
    padding: 3px 4px;
    border: 1px solid #555;
    font-size: 12px;
    line-height: 14px;
    letter-spacing: 0.7px;
    color: #666;
}
.textarea svg {
    position: absolute;
    right: 1px;
    bottom: 1px;
    width: 9px;
    height: 9px;
}
.describe .more {
    margin-top: 16px;
}
.describe .access {
    margin-top: 17px;
}
.describe a {
    display: flex;
    align-items: center;
    gap: 9px;
    height: 18px;
    margin-top: 9px;
    color: #666;
}
.describe a svg {
    width: 14px;
    height: 14px;
}
.guide .used {
    height: 218px;
}
.source {
    display: flex;
    gap: 10px;
    margin-top: 13px;
    padding-left: 6px;
    font-family: "Open Sans", "Noto Sans CJK KR", sans-serif;
    font-size: 14px;
    font-weight: 300;
    line-height: 17px;
    letter-spacing: 0.3px;
}
.source em {
    margin-left: 2px;
}
.source svg {
    width: 10px;
    height: 6px;
    margin-top: 4px;
}
.fields {
    display: grid;
    grid-template-columns: 18px 62px;
    column-gap: 9px;
    grid-auto-rows: 20px;
    align-items: center;
    justify-items: end;
    margin-top: 24px;
    padding-left: 27px;
    letter-spacing: 0.4px;
}
.fields span {
    justify-self: start;
}
.fields svg {
    width: 14px;
    height: 12px;
    margin-right: 4px;
}
.abc {
    font-family: "Open Sans", sans-serif;
    font-size: 9px;
    font-weight: 600;
    letter-spacing: 0;
    color: #4996b2;
}
.scrollbar {
    width: 11px;
    background-color: #f0f0f0;
    display: flex;
    flex-direction: column;
    align-items: flex-end;
}
.scrollbar .thumb {
    width: 9px;
    height: 593px;
    background-color: #c1c1c1;
    margin-top: 5px;
}
.scrollbar i {
    border: 4px solid transparent;
}
.scrollbar .up {
    border-bottom-color: #999;
    margin-top: 4px;
}
.scrollbar .dn {
    border-top-color: #444;
    margin-top: auto;
    margin-bottom: 3px;
}

/* sheet tabs */
.tabs {
    height: 31px;
    flex: none;
    display: flex;
    border-top: 1px solid #ccc;
    border-bottom: 1px solid #ccc;
    background-color: #e6e6e6;
    color: #444;
    line-height: 28px;
    letter-spacing: 0.8px;
}
.tabs div {
    border-right: 1px solid #ccc;
    display: flex;
    align-items: center;
    justify-content: center;
    padding-bottom: 1px;
}
.t-data { width: 130px; }
.tabs .t-data {
    justify-content: flex-start;
    padding-left: 8px;
    gap: 7px;
}
.t-data svg {
    width: 9px;
    height: 12px;
}
.t-1 { width: 184px; }
.t-2 { width: 171px; }
.t-4 { width: 186px; }
.t-s {
    width: 48px;
    letter-spacing: 0.5px;
}
.tabs .current {
    background-color: #fafafa;
}
.t-new { width: 32px; }
.t-new svg {
    width: 16px;
    height: 16px;
}

/* status bar */
.status {
    height: 14px;
    flex: none;
    display: flex;
    overflow: hidden;
    background-color: #ebebeb;
    font-size: 11px;
    line-height: 21px;
    letter-spacing: 0.6px;
}
.s-marks {
    width: 72px;
    padding-left: 1px;
}
.s-rows {
    width: 111px;
}
.s-sum {
    letter-spacing: 0.2px;
}
.user {
    width: 128px;
    margin-left: auto;
    display: flex;
    padding-left: 6px;
    border-left: 1px solid #ccc;
    letter-spacing: -0.1px;
}
.user svg {
    width: 10px;
    height: 13px;
    margin: 2px 11px 0 0;
}
.user i {
    margin: 8px 7px 0 auto;
    height: 0;
    border: 4px solid transparent;
    border-top-color: #000;
}
.cell {
    border-left: 1px solid #ccc;
    height: 14px;
}
.c1 { width: 27px; }
.c2 { width: 27px; }
.c3 { width: 47px; }
.nav {
    width: 71px;
    padding: 4px 0 0 6px;
}
.nav svg {
    width: 58px;
    height: 10px;
}
.thumbs {
    width: 62px;
    padding: 4px 0 0 8px;
    overflow: hidden;
}
.thumbs svg {
    width: 54px;
    height: 12px;
}

/* overlays */
.highlight-box {
    position: absolute;
    left: 679px;
    top: 402px;
    width: 367px;
    height: 188px;
    border: 2px solid #f00;
    box-shadow: 0 0 0 1px rgba(255, 0, 0, 0.5), inset 0 0 0 1px rgba(255, 0, 0, 0.5);
}
.tooltip {
    position: absolute;
    left: 737px;
    top: 444px;
    width: 200px;
    height: 56px;
    padding: 6px 7px;
    display: grid;
    grid-template-columns: 89px auto;
    grid-auto-rows: 20px;
    line-height: 20px;
    background-color: #fff;
    border: 1px solid #ccc;
    box-shadow: 2px 2px 3px rgba(0, 0, 0, 0.3);
    color: #333;
    font-family: "Open Sans", "Noto Sans CJK KR", sans-serif;
    font-size: 13px;
    letter-spacing: 0.4px;
}
.tooltip span {
    color: #787878;
    letter-spacing: 0.7px;
}
```
